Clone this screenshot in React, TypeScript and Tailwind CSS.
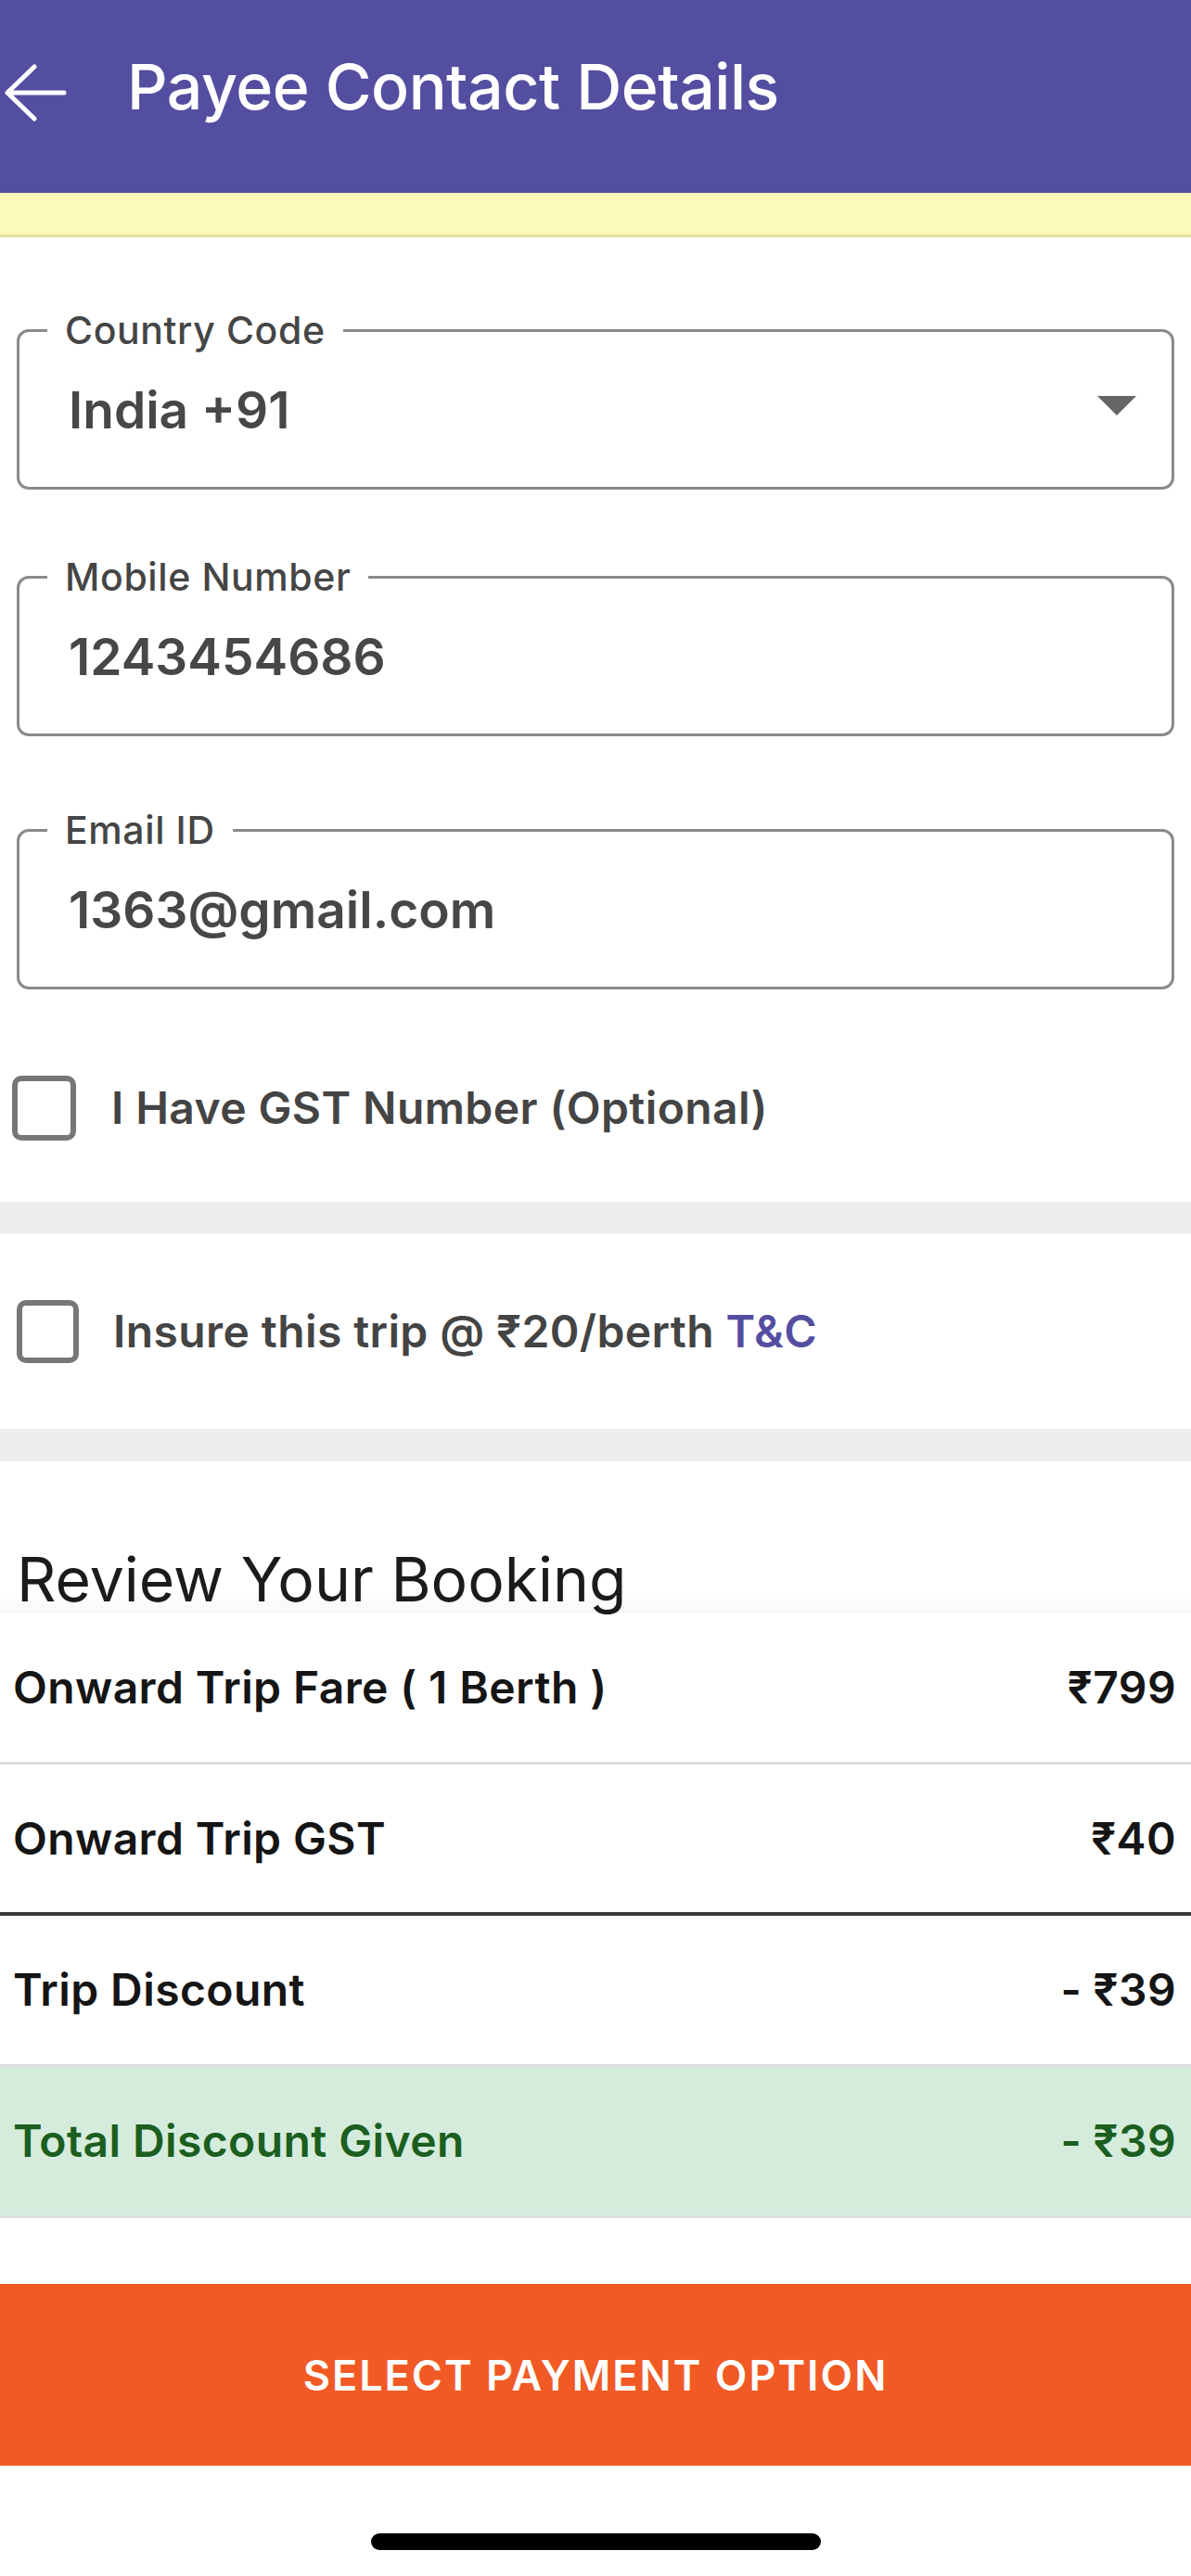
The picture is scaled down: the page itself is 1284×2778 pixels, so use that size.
import React from "react";

type FieldProps = {
  label: string;
  value: string;
  select?: boolean;
  className?: string;
};

// Outlined text field with the label sitting in the top border notch
function Field({ label, value, select, className }: FieldProps) {
  return (
    <fieldset className={`m-0 p-0 border-[3px] border-[#8a8a8a] rounded-[13px] ${className ?? ""}`}>
      <legend className="ml-[30px] px-[19px] text-[41px] leading-[48px] font-medium tracking-[0.6px] text-[#454545]">
        {label}
      </legend>
      <div className="h-[145px] pb-[20px] pl-[53px] pr-[38px] flex items-center justify-between">
        <span className="text-[55px] leading-none font-semibold text-[#474747]">{value}</span>
        {select && (
          <svg width="42" height="21" viewBox="0 0 42 21" className="mb-[10px]">
            <polygon points="0,0 42,0 21,21" fill="#666666" />
          </svg>
        )}
      </div>
    </fieldset>
  );
}

function Checkbox({ className }: { className?: string }) {
  return (
    <div
      className={`shrink-0 border-[6px] border-[#777777] rounded-[10px] bg-white ${className ?? ""}`}
    />
  );
}

type Row = { label: string; amount: string; divider: "light" | "dark"; green?: boolean };

const rows: Row[] = [
  { label: "Onward Trip Fare ( 1 Berth )", amount: "₹799", divider: "light" },
  { label: "Onward Trip GST", amount: "₹40", divider: "dark" },
  { label: "Trip Discount", amount: "- ₹39", divider: "light" },
  { label: "Total Discount Given", amount: "- ₹39", divider: "light", green: true },
];

export default function App() {
  return (
    <div className="w-[1284px] h-[2778px] flex flex-col bg-white overflow-hidden font-['Inter','Noto_Sans',sans-serif]">
      {/* Top app bar */}
      <header className="h-[208px] shrink-0 bg-[#544ea1]">
        <div className="h-[186px] flex items-center">
          <svg width="70" height="62" viewBox="0 0 70 62" className="ml-[2px] mt-[14px]">
            <path
              d="M67 31 H6 M35 3 L6 31 L35 59"
              fill="none"
              stroke="#ffffff"
              strokeWidth="5"
              strokeLinecap="round"
              strokeLinejoin="round"
            />
          </svg>
          <h1 className="ml-[65px] text-[68px] leading-none font-medium text-white tracking-[-0.5px]">
            Payee Contact Details
          </h1>
        </div>
      </header>

      <div className="flex-1 overflow-hidden">
        <div className="h-[48px] bg-[#fbfab9] border-b-[3px] border-[#e2e0a2]" />

        <div className="px-[18px]">
          <Field label="Country Code" value="India +91" select className="mt-[76px]" />
          <Field label="Mobile Number" value="1243454686" className="mt-[70px]" />
          <Field label="Email ID" value="1363@gmail.com" className="mt-[77px]" />
        </div>

        <div className="pt-[93px] pb-[66px] pl-[13px] flex items-center gap-[38px]">
          <Checkbox className="w-[69px] h-[70px]" />
          <span className="text-[48px] leading-none font-semibold tracking-[0.4px] text-[#444444]">
            I Have GST Number (Optional)
          </span>
        </div>

        <div className="h-[35px] bg-[#eeeeee]" />

        <div className="py-[71px] pl-[18px] flex items-center gap-[37px]">
          <Checkbox className="w-[67px] h-[68px]" />
          <span className="text-[48px] leading-none font-semibold tracking-[0.4px] text-[#444444]">
            Insure this trip @ ₹20/berth <span className="text-[#544ea1]">T&amp;C</span>
          </span>
        </div>

        <div className="h-[35px] bg-[#eeeeee]" />

        <div className="h-[164px] flex items-end pb-[4px] pl-[18px] bg-gradient-to-b from-white from-85% to-[#f7f7f7]">
          <h2 className="text-[66px] leading-none font-normal text-[#1b1b1b]">Review Your Booking</h2>
        </div>

        {rows.map((r) => (
          <div
            key={r.label}
            className={`h-[163px] flex items-center justify-between pl-[14px] pr-[16px] text-[48px] leading-none font-semibold tracking-[0.4px] ${
              r.green ? "bg-[#d5ecdc] text-[#1b5e20]" : "text-[#151515]"
            } ${r.divider === "dark" ? "border-b-[4px] border-[#3b3b3b]" : "border-b-[3px] border-[#dedede]"}`}
          >
            <span>{r.label}</span>
            <span>{r.amount}</span>
          </div>
        ))}
      </div>

      {/* Bottom action */}
      <button className="h-[196px] shrink-0 bg-[#f15a24] text-white text-[45px] font-semibold tracking-[2px] leading-none">
        SELECT PAYMENT OPTION
      </button>
      <div className="h-[119px] shrink-0 bg-white flex justify-center">
        <div className="mt-[73px] w-[485px] h-[18px] rounded-full bg-black" />
      </div>
    </div>
  );
}
